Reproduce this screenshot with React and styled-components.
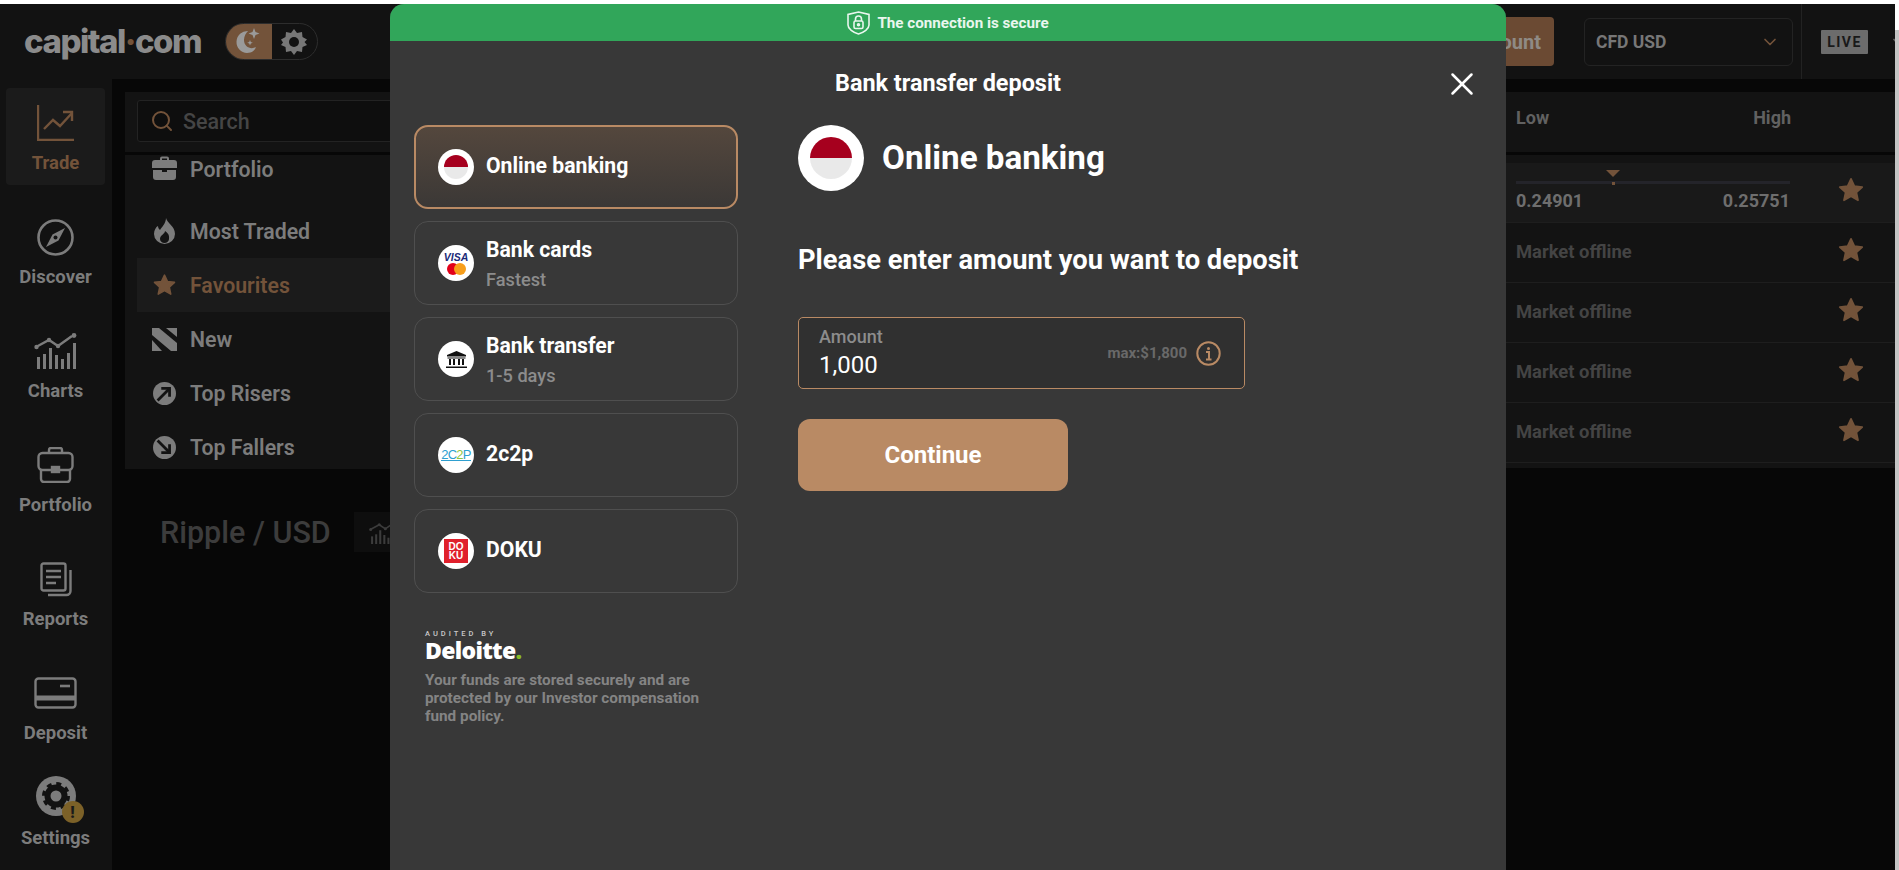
import styled, { createGlobalStyle } from "styled-components";
import { ChevronDown, Search as SearchGlyph, X } from "lucide-react";

const GlobalStyle = createGlobalStyle`
  html, body { margin: 0; padding: 0; background: #fff; overflow: hidden; }
  * { box-sizing: border-box; }
  body { font-family: Roboto, "Liberation Sans", sans-serif; }
`;

const Page = styled.div`
  position: relative;
  width: 1899px;
  height: 870px;
  padding: 4px 4px 0 0;
  background: #fff;
  overflow: hidden;
`;

const Scrollbar = styled.div`
  position: absolute;
  top: 30px;
  right: 0;
  width: 4px;
  bottom: 0;
  background: #c4c4c4;
`;

const Frame = styled.div`
  height: 866px;
  display: flex;
  flex-direction: column;
  background: #070707;
`;

const Header = styled.header`
  height: 75px;
  flex: none;
  display: flex;
  align-items: center;
  padding-left: 24px;
  background: #121212;
  overflow: hidden;
`;

const Logo = styled.div`
  font-family: Inter, sans-serif;
  font-weight: 800;
  font-size: 33px;
  letter-spacing: -1.5px;
  color: #8b8b8b;
  width: 201px;
  margin-top: -2px;
  span { color: #73533a; }
`;

const Toggle = styled.div`
  display: flex;
  width: 93px;
  height: 37px;
  border: 1px solid #2d2d2d;
  border-radius: 19px;
  overflow: hidden;
`;

const ToggleHalf = styled.div`
  width: 46px;
  display: flex;
  align-items: center;
  justify-content: center;
  background: ${(p) => (p.$active ? "#73533a" : "transparent")};
`;

const Spacer = styled.div`
  flex: 1;
`;

const AccountButton = styled.div`
  height: 49px;
  display: flex;
  align-items: center;
  padding: 0 13px 0 20px;
  margin-right: 30px;
  border-radius: 4px;
  background: #6b4a33;
  color: #8f8a85;
  font-size: 20px;
  font-weight: 700;
`;

const Select = styled.div`
  width: 209px;
  height: 48px;
  display: flex;
  align-items: center;
  justify-content: space-between;
  padding: 0 12px 0 11px;
  margin-right: 8px;
  border: 1px solid #232323;
  border-radius: 6px;
  color: #777;
  font-size: 17.5px;
  font-weight: 700;
`;

const HeaderDivider = styled.div`
  width: 1px;
  height: 100%;
  background: #222;
  margin-right: 19px;
`;

const LiveBadge = styled.div`
  width: 47px;
  height: 24px;
  display: flex;
  align-items: center;
  justify-content: center;
  background: #6c6c6c;
  border-radius: 1px;
  color: #191919;
  font-size: 14px;
  font-weight: 700;
  letter-spacing: 1.5px;
  margin-right: 21px;
`;

const AccountChevron = styled.div`
  flex: none;
  display: flex;
  margin-right: -14px;
`;

const Body = styled.div`
  flex: 1;
  min-height: 0;
  display: flex;
`;

const Sidebar = styled.nav`
  width: 112px;
  flex: none;
  background: #121212;
  padding: 9px 7px 0 6px;
  display: flex;
  flex-direction: column;
  gap: 17px;
`;

const NavItem = styled.div`
  height: 97px;
  padding-top: ${(p) => p.$top ?? 17}px;
  display: flex;
  flex-direction: column;
  align-items: center;
  border-radius: 4px;
  background: ${(p) => (p.$active ? "#1b1b1b" : "transparent")};
  color: ${(p) => (p.$active ? "#73533a" : "#7c7c7c")};
`;

const NavIcon = styled.div`
  position: relative;
  height: 36px;
  display: flex;
  align-items: center;
  justify-content: center;
`;

const NavLabel = styled.div`
  margin-top: ${(p) => p.$gap ?? 11}px;
  font-size: 18.5px;
  line-height: 22px;
  font-weight: 700;
`;

const Badge = styled.div`
  position: absolute;
  right: -8px;
  bottom: -9px;
  width: 22px;
  height: 22px;
  border-radius: 50%;
  display: flex;
  align-items: center;
  justify-content: center;
  background: #7c6128;
  color: #1a1a1a;
  font-size: 16px;
  font-weight: 900;
`;

const Main = styled.main`
  flex: 1;
  display: grid;
  grid-template-columns: 1381px 1fr;
  padding: 13px 0 0 13px;
`;

const LeftColumn = styled.div`
  display: flex;
  flex-direction: column;
`;

const SearchPanel = styled.div`
  height: 60px;
  background: #131313;
  padding: 8px 12px 0;
`;

const SearchBox = styled.div`
  height: 42px;
  display: flex;
  align-items: center;
  gap: 9px;
  padding-left: 12px;
  border: 1px solid #232323;
  border-radius: 3px;
  background: #0e0e0e;
  color: #454545;
  font-size: 21.5px;
  font-weight: 500;
`;

const ListPanel = styled.div`
  height: 314px;
  margin-top: 3px;
  padding: 0 12px;
  background: #131313;
`;

const ListRow = styled.div`
  height: ${(p) => p.$height ?? 54}px;
  display: flex;
  align-items: ${(p) => (p.$height ? "flex-start" : "center")};
  gap: 13px;
  padding-left: 15px;
  background: ${(p) => (p.$active ? "#1b1b1b" : "transparent")};
  color: ${(p) => (p.$active ? "#73533a" : "#7c7c7c")};
  font-size: 21.3px;
  font-weight: 600;
`;

const ListLabel = styled.span`
  padding-top: ${(p) => p.$push ?? 1}px;
`;

const ListIcon = styled.div`
  width: 25px;
  height: 25px;
  flex: none;
  display: flex;
  align-items: center;
  justify-content: center;
`;

const InstrumentBar = styled.div`
  display: flex;
  align-items: center;
  gap: 23px;
  margin: 43px 0 0 35px;
`;

const InstrumentName = styled.div`
  font-size: 30.5px;
  font-weight: 500;
  color: #3c3c3c;
`;

const InstrumentChip = styled.div`
  width: 60px;
  height: 40px;
  display: flex;
  align-items: center;
  justify-content: center;
  background: #0e0e0e;
  color: #3c3c3c;
`;

const PriceTable = styled.div`
  display: flex;
  flex-direction: column;
`;

const TableHead = styled.div`
  height: 60px;
  display: flex;
  align-items: center;
  justify-content: space-between;
  padding: 0 104px 10px 10px;
  background: #131313;
  color: #616161;
  font-size: 18px;
  font-weight: 700;
`;

const TableBody = styled.div`
  margin-top: 3px;
  padding-top: 8px;
  height: 313px;
  background: #131313;
`;

const TableRow = styled.div`
  height: 60px;
  display: flex;
  align-items: center;
  justify-content: space-between;
  padding: 0 30px 0 10px;
  border-bottom: 1px solid #1e1e1e;
  background: ${(p) => (p.$highlight ? "#191919" : "transparent")};
`;

const Offline = styled.div`
  font-size: 18.4px;
  font-weight: 700;
  color: #444;
  margin-top: -2px;
`;

const StarSlot = styled.div`
  display: flex;
  margin-top: -6px;
`;

const RangeCell = styled.div`
  width: 274px;
  padding-top: 6px;
`;

const RangeTrack = styled.div`
  position: relative;
  height: 3px;
  background: #24242a;
  margin-bottom: 6px;
`;

const RangeMarker = styled.div`
  position: absolute;
  left: 90px;
  top: -11px;
  width: 0;
  height: 0;
  border-left: 7px solid transparent;
  border-right: 7px solid transparent;
  border-top: 7px solid #73533a;
  &::after {
    content: "";
    position: absolute;
    left: -1px;
    top: 5px;
    width: 3px;
    height: 3px;
    background: #73533a;
  }
`;

const RangeValues = styled.div`
  display: flex;
  justify-content: space-between;
  font-size: 18px;
  font-weight: 700;
  color: #6e6e6e;
`;

const Modal = styled.section`
  position: absolute;
  left: 390px;
  top: 4px;
  bottom: 0;
  width: 1116px;
  background: #383838;
  border-radius: 14px 14px 0 0;
  overflow: hidden;
`;

const SecureBar = styled.div`
  height: 37px;
  display: flex;
  align-items: center;
  justify-content: center;
  gap: 7px;
  background: #31a65a;
  color: #e9f6ee;
  font-size: 15.2px;
  font-weight: 700;
`;

const ModalHead = styled.div`
  position: relative;
  height: 84px;
  display: flex;
  justify-content: center;
  padding-top: 27px;
  color: #fff;
  font-size: 23.4px;
  line-height: 30px;
  font-weight: 700;
`;

const CloseButton = styled.div`
  position: absolute;
  top: 24px;
  right: 25px;
  color: #fff;
  display: flex;
`;

const Columns = styled.div`
  display: flex;
  padding-left: 24px;
`;

const MethodColumn = styled.div`
  width: 324px;
  margin-right: 60px;
  display: flex;
  flex-direction: column;
  gap: 12px;
`;

const MethodCard = styled.div`
  height: 84px;
  display: flex;
  align-items: center;
  gap: 12px;
  padding-left: ${(p) => (p.$active ? "22px" : "23px")};
  border: ${(p) => (p.$active ? "2px solid #b98a64" : "1px solid #4f4f4f")};
  border-radius: 14px;
  background: ${(p) =>
    p.$active ? "linear-gradient(180deg, #54473d 0%, #3b3836 100%)" : "transparent"};
`;

const MethodLogo = styled.div`
  width: ${(p) => p.$size ?? 36}px;
  height: ${(p) => p.$size ?? 36}px;
  flex: none;
  border-radius: 50%;
  background: #fff;
  display: flex;
  flex-direction: column;
  align-items: center;
  justify-content: center;
  overflow: hidden;
`;

const Flag = styled.div`
  width: ${(p) => p.$size}px;
  height: ${(p) => p.$size}px;
  border-radius: 50%;
  background: linear-gradient(180deg, #a6001e 50%, #e9e9e9 50%);
`;

const MethodText = styled.div`
  display: flex;
  flex-direction: column;
  gap: 9px;
  margin-top: 2px;
`;

const MethodName = styled.div`
  color: #fff;
  font-size: 21.2px;
  line-height: 22px;
  font-weight: 700;
  margin-bottom: ${(p) => (p.$solo ? "2px" : "0")};
`;

const MethodNote = styled.div`
  color: #8c8c8c;
  font-size: 18.2px;
  line-height: 20px;
  font-weight: 500;
`;

const VisaMark = styled.div`
  color: #1a2a78;
  font-family: "Liberation Sans", sans-serif;
  font-size: 10.5px;
  line-height: 11px;
  font-weight: 700;
  font-style: italic;
`;

const CodeMark = styled.div`
  font-family: "Liberation Sans", sans-serif;
  font-size: 13px;
  letter-spacing: -0.8px;
  border-bottom: 1px solid #2e9fd0;
  line-height: 11px;
  color: #2e9fd0;
  span { color: #8dc63f; }
`;

const DokuMark = styled.div`
  width: 24px;
  height: 24px;
  background: #e0202c;
  color: #fff;
  font-family: "Liberation Sans", sans-serif;
  font-size: 10px;
  line-height: 9px;
  font-weight: 700;
  text-align: center;
  padding-top: 3px;
`;

const AuditBlock = styled.div`
  margin: 24px 0 0 11px;
`;

const AuditedBy = styled.div`
  color: #c9c9c9;
  font-size: 7.5px;
  line-height: 9px;
  letter-spacing: 3px;
  font-weight: 500;
`;

const Deloitte = styled.div`
  color: #fff;
  font-family: "Open Sans", sans-serif;
  font-size: 23px;
  line-height: 24px;
  font-weight: 800;
  letter-spacing: -0.7px;
  span { color: #86bc25; }
`;

const AuditNote = styled.div`
  margin-top: 9px;
  width: 300px;
  color: #848484;
  font-size: 15.3px;
  line-height: 18px;
  font-weight: 700;
`;

const FormColumn = styled.div`
  width: 600px;
`;

const MethodHead = styled.div`
  display: flex;
  align-items: center;
  gap: 18px;
  color: #fff;
  font-size: 33.2px;
  font-weight: 700;
`;

const MethodHeadText = styled.span`
  margin-top: -2px;
`;

const FormTitle = styled.h2`
  margin: 49px 0 0;
  color: #fff;
  font-size: 27.3px;
  line-height: 40px;
  font-weight: 700;
`;

const AmountField = styled.div`
  width: 447px;
  height: 72px;
  margin-top: 37px;
  display: flex;
  align-items: center;
  justify-content: space-between;
  padding: 0 23px 0 20px;
  border: 1px solid #b98a64;
  border-radius: 5px;
  background: #303030;
`;

const AmountLabel = styled.div`
  color: #8c8c8c;
  font-size: 18px;
  line-height: 20px;
  font-weight: 500;
`;

const AmountValue = styled.div`
  color: #fff;
  font-size: 24px;
  line-height: 28px;
  margin-top: 4px;
`;

const AmountLimit = styled.div`
  display: flex;
  align-items: center;
  gap: 9px;
  color: #696969;
  font-size: 15px;
  font-weight: 700;
`;

const ContinueButton = styled.button`
  display: block;
  width: 270px;
  height: 72px;
  margin-top: 30px;
  border: 0;
  border-radius: 12px;
  background: #b98a64;
  color: #fff;
  font-family: inherit;
  font-size: 24px;
  font-weight: 700;
`;

const Star = ({ size = 28, color = "#73533a" }) => (
  <svg width={size} height={size} viewBox="0 0 24 24">
    <path
      fill={color}
      stroke={color}
      strokeWidth="1.5"
      strokeLinejoin="round"
      d="M12 2.5l2.9 6.2 6.7.8-5 4.6 1.4 6.7-6-3.4-6 3.4 1.4-6.7-5-4.6 6.7-.8z"
    />
  </svg>
);

const TradeIcon = () => (
  <svg width="38" height="36" viewBox="0 0 38 36" fill="none" stroke="currentColor" strokeWidth="2.4">
    <path d="M1 0v35h36" />
    <path d="M7 24l9-9 7 6 12-13" />
    <path d="M26 7h9v9" />
  </svg>
);

const DiscoverIcon = () => (
  <svg width="37" height="37" viewBox="0 0 37 37">
    <circle cx="18.5" cy="18.5" r="17" fill="none" stroke="currentColor" strokeWidth="2.6" />
    <path fill="currentColor" d="M28 9l-6.5 12.5L9 28l6.5-12.5z" />
    <circle cx="18.5" cy="18.5" r="2" fill="#121212" />
  </svg>
);

const ChartsIcon = ({ size = 44 }) => (
  <svg width={size} height={(size * 36) / 44} viewBox="0 0 44 36" fill="currentColor">
    <path d="M2 14l13-7 9 6L38 3" fill="none" stroke="currentColor" strokeWidth="2.4" />
    <circle cx="2.5" cy="14" r="2.2" />
    <circle cx="15" cy="7" r="2.2" />
    <circle cx="24" cy="13" r="2.2" />
    <circle cx="40" cy="2.5" r="2.4" />
    <rect x="3" y="24" width="3" height="12" />
    <rect x="9" y="21" width="3" height="15" />
    <rect x="15" y="15" width="3" height="21" />
    <rect x="21" y="22" width="3" height="14" />
    <rect x="27" y="26" width="3" height="10" />
    <rect x="33" y="20" width="3" height="16" />
    <rect x="39" y="10" width="3" height="26" />
  </svg>
);

const CaseIcon = () => (
  <svg width="37" height="36" viewBox="0 0 37 36" fill="none" stroke="currentColor" strokeWidth="2.4">
    <rect x="1.5" y="6" width="34" height="17" rx="4" />
    <path d="M4 23v9a3 3 0 003 3h23a3 3 0 003-3v-9" />
    <path d="M12 6V3a2 2 0 012-2h9a2 2 0 012 2v3" />
    <rect x="15" y="20" width="7" height="5" fill="currentColor" />
  </svg>
);

const ReportsIcon = () => (
  <svg width="32" height="35" viewBox="0 0 32 35" fill="none" stroke="currentColor" strokeWidth="2.4">
    <rect x="1.5" y="1.5" width="24" height="27" rx="2" />
    <path d="M6 9h15M6 15h15M6 21h10" strokeWidth="2.6" />
    <path d="M30.5 8v21a4 4 0 01-4 4H8" />
  </svg>
);

const CardIcon = () => (
  <svg width="43" height="32" viewBox="0 0 43 32" fill="none" stroke="currentColor" strokeWidth="2.4">
    <rect x="1.5" y="1.5" width="40" height="29" rx="3" />
    <path d="M1.5 21h40" strokeWidth="5" />
    <path d="M26 9h10" strokeWidth="2.6" />
  </svg>
);

const SettingsIcon = () => (
  <svg width="40" height="40" viewBox="0 0 40 40">
    <circle cx="20" cy="20" r="20" fill="currentColor" />
    <circle cx="20" cy="20" r="8.5" fill="none" stroke="#121212" strokeWidth="6" />
    <circle cx="20" cy="20" r="12.5" fill="none" stroke="#121212" strokeWidth="3" strokeDasharray="5 4.8" />
  </svg>
);

const SmallCase = () => (
  <svg width="25" height="24" viewBox="0 0 25 24" fill="currentColor">
    <path d="M8 4V2.5A2 2 0 0110 .5h5a2 2 0 012 2V4h5a3 3 0 013 3v5H0V7a3 3 0 013-3zm2 0h5V2.5h-5z" />
    <path d="M1 14h9v2h5v-2h9v7a3 3 0 01-3 3H4a3 3 0 01-3-3z" />
  </svg>
);

const Flame = () => (
  <svg width="23" height="26" viewBox="0 0 23 26" fill="currentColor">
    <path
      fillRule="evenodd"
      d="M13 0c1 5 9 8 9 16a10.500 10 0 01-21 0c0-4 2-7 4-8 0 2 1 3 2 4 2-3 6-7 6-12zm-1 13c0 3-5 4-5 8a4.500 4 0 009 0c0-1 1-5-4-8z"
    />
  </svg>
);

const NewIcon = () => (
  <svg width="25" height="23" viewBox="0 0 25 23" fill="currentColor">
    <path d="M0 0h7l18 15v8h-6L0 7z" />
    <path d="M14 0h11v9z" />
    <path d="M0 12l10 11H0z" />
  </svg>
);

const ArrowDisc = ({ down }) => (
  <svg width="25" height="23" viewBox="0 0 25 25">
    <circle cx="12.500" cy="12.500" r="12.500" fill="currentColor" />
    <g transform={down ? "rotate(90 12.500 12.500)" : undefined} fill="none" stroke="#131313" strokeWidth="3">
      <path d="M5 20L18 7" />
      <path d="M9 7h9v9" />
    </g>
  </svg>
);

const MoonIcon = () => (
  <svg width="26" height="28" viewBox="0 0 26 28" fill="#9a9a9a">
    <path d="M12 3a11 11 0 00-1 22c5 0 8-3 9-6-5 3-12 0-12-7 0-4 2-7 4-9z" />
    <path d="M18 0l1.500 4 4 1.500-4 1.500-1.500 4-1.500-4-4-1.500 4-1.500zM14 12l.8 2 2 .8-2 .8-.8 2-.8-2-2-.8 2-.8z" />
  </svg>
);

const SunIcon = () => (
  <svg width="26" height="26" viewBox="0 0 26 26">
    <path fill="#777" d="M13 0l3 4 5-1 .5 5 4.500 2.500-2.500 2.500L26 16l-4.500 2-.5 5-5-1-3 4-3-4-5 1-.5-5L0 16l2-2.500L0 10.500 4.500 8 5 3l5 1z" />
    <circle cx="13" cy="13" r="5" fill="#121212" />
  </svg>
);

const ShieldIcon = () => (
  <svg width="23" height="24" viewBox="0 0 23 24" fill="none" stroke="#e9f6ee" strokeWidth="1.600">
    <path d="M11.500 1L22 3.500V14c0 4-5 7.500-10.500 9C6 21.500 1 18 1 14V3.500z" />
    <rect x="7" y="10" width="9" height="7.500" rx="1.500" />
    <path d="M8.500 10V8a3 3 0 016 0v2" />
    <circle cx="11.500" cy="13.700" r="1" fill="#e9f6ee" />
  </svg>
);

const BankIcon = () => (
  <svg width="21" height="17" viewBox="0 0 21 17" fill="#111">
    <path d="M10.500 0L20 4v1.500H1V4z" />
    <rect x="1.500" y="6.500" width="18" height="1" />
    <rect x="3" y="8" width="2" height="6" />
    <rect x="7" y="8" width="2" height="6" />
    <rect x="12" y="8" width="2" height="6" />
    <rect x="16" y="8" width="2" height="6" />
    <rect x="0" y="15.500" width="21" height="1.500" />
  </svg>
);

const MasterMark = () => (
  <svg width="19" height="12" viewBox="0 0 19 12">
    <circle cx="6" cy="6" r="6" fill="#e2001a" />
    <circle cx="13" cy="6" r="6" fill="#f79e1b" />
  </svg>
);

const InfoIcon = () => (
  <svg width="25" height="25" viewBox="0 0 25 25" fill="none" stroke="#b98a64">
    <circle cx="12.500" cy="12.500" r="11.200" strokeWidth="2" />
    <circle cx="12.500" cy="7.500" r="1.500" fill="#b98a64" stroke="none" />
    <path d="M10 11h3v7M10 18.500h5.500" strokeWidth="2" />
  </svg>
);

const navItems = [
  { label: "Trade", icon: <TradeIcon />, active: true },
  { label: "Discover", icon: <DiscoverIcon /> },
  { label: "Charts", icon: <ChartsIcon /> },
  { label: "Portfolio", icon: <CaseIcon /> },
  { label: "Reports", icon: <ReportsIcon /> },
  { label: "Deposit", icon: <CardIcon /> },
];

const listItems = [
  { label: "Most Traded", icon: <Flame /> },
  { label: "Favourites", icon: <Star size={28} />, active: true },
  { label: "New", icon: <NewIcon /> },
  { label: "Top Risers", icon: <ArrowDisc /> },
  { label: "Top Fallers", icon: <ArrowDisc down /> },
];

const App = () => {
  return (
    <Page>
      <GlobalStyle />
      <Scrollbar />
      <Frame>
        <Header>
          <Logo>
            capital<span>·</span>com
          </Logo>
          <Toggle>
            <ToggleHalf $active>
              <MoonIcon />
            </ToggleHalf>
            <ToggleHalf>
              <SunIcon />
            </ToggleHalf>
          </Toggle>
          <Spacer />
          <AccountButton>Open real account</AccountButton>
          <Select>
            CFD USD
            <ChevronDown size={20} color="#73533a" />
          </Select>
          <HeaderDivider />
          <LiveBadge>LIVE</LiveBadge>
          <AccountChevron>
            <ChevronDown size={20} color="#666" />
          </AccountChevron>
        </Header>
        <Body>
          <Sidebar>
            {navItems.map((item) => (
              <NavItem key={item.label} $active={item.active}>
                <NavIcon>{item.icon}</NavIcon>
                <NavLabel>{item.label}</NavLabel>
              </NavItem>
            ))}
            <NavItem $top={6}>
              <NavIcon>
                <SettingsIcon />
                <Badge>!</Badge>
              </NavIcon>
              <NavLabel $gap={13}>Settings</NavLabel>
            </NavItem>
          </Sidebar>
          <Main>
            <LeftColumn>
              <SearchPanel>
                <SearchBox>
                  <SearchGlyph size={24} color="#73533a" />
                  Search
                </SearchBox>
              </SearchPanel>
              <ListPanel>
                <ListRow $height={49}>
                  <ListIcon>
                    <SmallCase />
                  </ListIcon>
                  <ListLabel $push={2}>Portfolio</ListLabel>
                </ListRow>
                {listItems.map((item) => (
                  <ListRow key={item.label} $active={item.active}>
                    <ListIcon>{item.icon}</ListIcon>
                    <ListLabel>{item.label}</ListLabel>
                  </ListRow>
                ))}
              </ListPanel>
              <InstrumentBar>
                <InstrumentName>Ripple / USD</InstrumentName>
                <InstrumentChip>
                  <ChartsIcon size={30} />
                </InstrumentChip>
              </InstrumentBar>
            </LeftColumn>
            <PriceTable>
              <TableHead>
                <span>Low</span>
                <span>High</span>
              </TableHead>
              <TableBody>
                <TableRow $highlight>
                  <RangeCell>
                    <RangeTrack>
                      <RangeMarker />
                    </RangeTrack>
                    <RangeValues>
                      <span>0.24901</span>
                      <span>0.25751</span>
                    </RangeValues>
                  </RangeCell>
                  <StarSlot>
                    <Star />
                  </StarSlot>
                </TableRow>
                {[0, 1, 2, 3].map((row) => (
                  <TableRow key={row}>
                    <Offline>Market offline</Offline>
                    <StarSlot>
                      <Star />
                    </StarSlot>
                  </TableRow>
                ))}
              </TableBody>
            </PriceTable>
          </Main>
        </Body>
      </Frame>

      <Modal>
        <SecureBar>
          <ShieldIcon />
          The connection is secure
        </SecureBar>
        <ModalHead>
          Bank transfer deposit
          <CloseButton>
            <X size={38} strokeWidth={1.6} />
          </CloseButton>
        </ModalHead>
        <Columns>
          <MethodColumn>
            <MethodCard $active>
              <MethodLogo>
                <Flag $size={24} />
              </MethodLogo>
              <MethodName $solo>Online banking</MethodName>
            </MethodCard>
            <MethodCard>
              <MethodLogo>
                <VisaMark>VISA</VisaMark>
                <MasterMark />
              </MethodLogo>
              <MethodText>
                <MethodName>Bank cards</MethodName>
                <MethodNote>Fastest</MethodNote>
              </MethodText>
            </MethodCard>
            <MethodCard>
              <MethodLogo>
                <BankIcon />
              </MethodLogo>
              <MethodText>
                <MethodName>Bank transfer</MethodName>
                <MethodNote>1-5 days</MethodNote>
              </MethodText>
            </MethodCard>
            <MethodCard>
              <MethodLogo>
                <CodeMark>
                  2C<span>2</span>P
                </CodeMark>
              </MethodLogo>
              <MethodName $solo>2c2p</MethodName>
            </MethodCard>
            <MethodCard>
              <MethodLogo>
                <DokuMark>
                  DO
                  <br />
                  KU
                </DokuMark>
              </MethodLogo>
              <MethodName $solo>DOKU</MethodName>
            </MethodCard>
            <AuditBlock>
              <AuditedBy>AUDITED BY</AuditedBy>
              <Deloitte>
                Deloitte<span>.</span>
              </Deloitte>
              <AuditNote>
                Your funds are stored securely and are protected by our Investor compensation fund
                policy.
              </AuditNote>
            </AuditBlock>
          </MethodColumn>
          <FormColumn>
            <MethodHead>
              <MethodLogo $size={66}>
                <Flag $size={42} />
              </MethodLogo>
              <MethodHeadText>Online banking</MethodHeadText>
            </MethodHead>
            <FormTitle>Please enter amount you want to deposit</FormTitle>
            <AmountField>
              <div>
                <AmountLabel>Amount</AmountLabel>
                <AmountValue>1,000</AmountValue>
              </div>
              <AmountLimit>
                max:$1,800
                <InfoIcon />
              </AmountLimit>
            </AmountField>
            <ContinueButton>Continue</ContinueButton>
          </FormColumn>
        </Columns>
      </Modal>
    </Page>
  );
};

export default App;
